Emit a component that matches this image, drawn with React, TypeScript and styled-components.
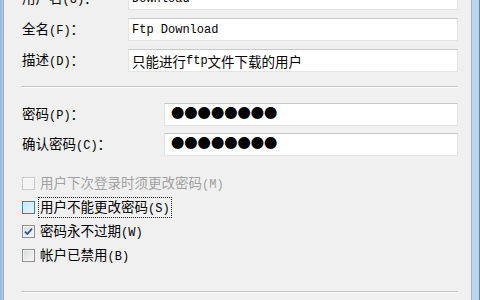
import React from "react";
import styled, { createGlobalStyle, css } from "styled-components";

const Global = createGlobalStyle`
  html, body { margin: 0; padding: 0; background: #f0f0f0; }
  body { font-family: "Noto Sans CJK SC", sans-serif; }
  #root { width: 480px; height: 300px; }
`;

const Window = styled.div`
  display: flex;
  width: 480px;
  height: 300px;
  overflow: hidden;
`;

const LeftFrame = styled.div`
  flex: none;
  width: 3px;
  background: linear-gradient(90deg, #8fb3df, #b4cff0);
  border-right: 1px solid #a3acb8;
`;

const RightFrame = styled.div`
  flex: none;
  width: 7px;
  background: #bcd5f0;
  border-left: 1px solid #aeb2b8;
  border-right: 1px solid #6f8196;
`;

const Panel = styled.div`
  flex: 1;
  display: flex;
  flex-direction: column;
  background: #f0f0f0;
  padding: 0 13px 0 18px;
  overflow: hidden;
`;

const Group = styled.div<{ $gap: number; $top: number }>`
  display: flex;
  flex-direction: column;
  gap: ${(p) => p.$gap}px;
  margin-top: ${(p) => p.$top}px;
`;

const FieldRow = styled.div<{ $labelWidth: number }>`
  display: grid;
  grid-template-columns: ${(p) => p.$labelWidth}px 1fr;
  align-items: center;
  height: 23px;
`;

const Label = styled.div`
  font-family: "Noto Sans CJK SC", sans-serif;
  font-size: 13.5px;
  line-height: 16px;
  color: #000;
  white-space: nowrap;
`;

const Latin = styled.span`
  font-family: "Liberation Mono", monospace;
  font-size: 12px;
`;

const TextBox = styled.div`
  box-sizing: border-box;
  height: 23px;
  display: flex;
  align-items: center;
  padding-left: 3px;
  background: #fff;
  border: 1px solid #e3e4e7;
  border-top-color: #c6c8cc;
  font-family: "Noto Sans CJK SC", sans-serif;
  font-size: 13.5px;
  color: #000;
  white-space: nowrap;
  overflow: hidden;
`;

const Dots = styled.span`
  font-family: "Noto Sans CJK SC", sans-serif;
  font-size: 13.3px;
  line-height: 1;
  margin-left: 3px;
  margin-top: -3px;
  letter-spacing: 0;
`;

const Separator = styled.div<{ $top: number }>`
  flex: none;
  height: 1px;
  margin-top: ${(p) => p.$top}px;
  margin-left: -1px;
  background: #c4c4c4;
  border-bottom: 1px solid #fbfbfb;
`;

const CheckRow = styled.div`
  display: flex;
  align-items: center;
  gap: 3px;
  height: 24px;
`;

type BoxState = "normal" | "hot" | "disabled";

const Box = styled.span<{ $state: BoxState }>`
  box-sizing: border-box;
  flex: none;
  width: 13px;
  height: 13px;
  display: flex;
  align-items: center;
  justify-content: center;
  border: 1px solid #8e8f8f;
  background: linear-gradient(135deg, #d5d7da, #fafafa);
  box-shadow: inset 0 0 0 1px #f4f4f4;
  ${(p) =>
    p.$state === "hot" &&
    css`
      border-color: #3c7fb1;
      background: linear-gradient(135deg, #c9e4fb, #eaf5ff);
      box-shadow: inset 0 0 0 1px #def0fe;
    `}
  ${(p) =>
    p.$state === "disabled" &&
    css`
      border-color: #c9c9c9;
      background: #f4f4f4;
      box-shadow: inset 0 0 0 1px #fbfbfb;
    `}
`;

const CheckText = styled.span<{ $disabled?: boolean; $focused?: boolean }>`
  font-family: "Noto Sans CJK SC", sans-serif;
  font-size: 13.5px;
  line-height: 16px;
  padding: 0 1px;
  border: 1px dotted ${(p) => (p.$focused ? "#222" : "transparent")};
  color: ${(p) => (p.$disabled ? "#a0a0a0" : "#000")};
  white-space: nowrap;
`;

const Mixed = ({ text }: { text: string }) => (
  <>
    {text
      .split(/([\x20-\x7e]+)/)
      .filter(Boolean)
      .map((s, i) =>
        /^[\x20-\x7e]+$/.test(s) ? <Latin key={i}>{s}</Latin> : <span key={i}>{s}</span>
      )}
  </>
);

const CheckMark = () => (
  <svg width="9" height="9" viewBox="0 0 9 9">
    <path d="M1 4.6 L3.4 7 L8 1.6" fill="none" stroke="#2c4d9c" strokeWidth="1.7" />
  </svg>
);

const fields = [
  { label: "用户名(U)：", value: "Download" },
  { label: "全名(F)：", value: "Ftp Download" },
  { label: "描述(D)：", value: "只能进行ftp文件下载的用户" },
];

const passwords = ["密码(P)：", "确认密码(C)："];

const checks: { label: string; state: BoxState; checked?: boolean; focused?: boolean }[] = [
  { label: "用户下次登录时须更改密码(M)", state: "disabled" },
  { label: "用户不能更改密码(S)", state: "hot", focused: true },
  { label: "密码永不过期(W)", state: "normal", checked: true },
  { label: "帐户已禁用(B)", state: "normal" },
];

export default function App() {
  return (
    <>
      <Global />
      <Window>
        <LeftFrame />
        <Panel>
          <Group $gap={8} $top={-13}>
            {fields.map((f) => (
              <FieldRow key={f.label} $labelWidth={106}>
                <Label>
                  <Mixed text={f.label} />
                </Label>
                <TextBox>
                  <Mixed text={f.value} />
                </TextBox>
              </FieldRow>
            ))}
          </Group>
          <Separator $top={14} />
          <Group $gap={7} $top={15}>
            {passwords.map((p) => (
              <FieldRow key={p} $labelWidth={142}>
                <Label>
                  <Mixed text={p} />
                </Label>
                <TextBox>
                  <Dots>●●●●●●●●</Dots>
                </TextBox>
              </FieldRow>
            ))}
          </Group>
          <Group $gap={0} $top={15}>
            {checks.map((c) => (
              <CheckRow key={c.label}>
                <Box $state={c.state}>{c.checked && <CheckMark />}</Box>
                <CheckText $disabled={c.state === "disabled"} $focused={c.focused}>
                  <Mixed text={c.label} />
                </CheckText>
              </CheckRow>
            ))}
          </Group>
          <Separator $top={24} />
        </Panel>
        <RightFrame />
      </Window>
    </>
  );
}
